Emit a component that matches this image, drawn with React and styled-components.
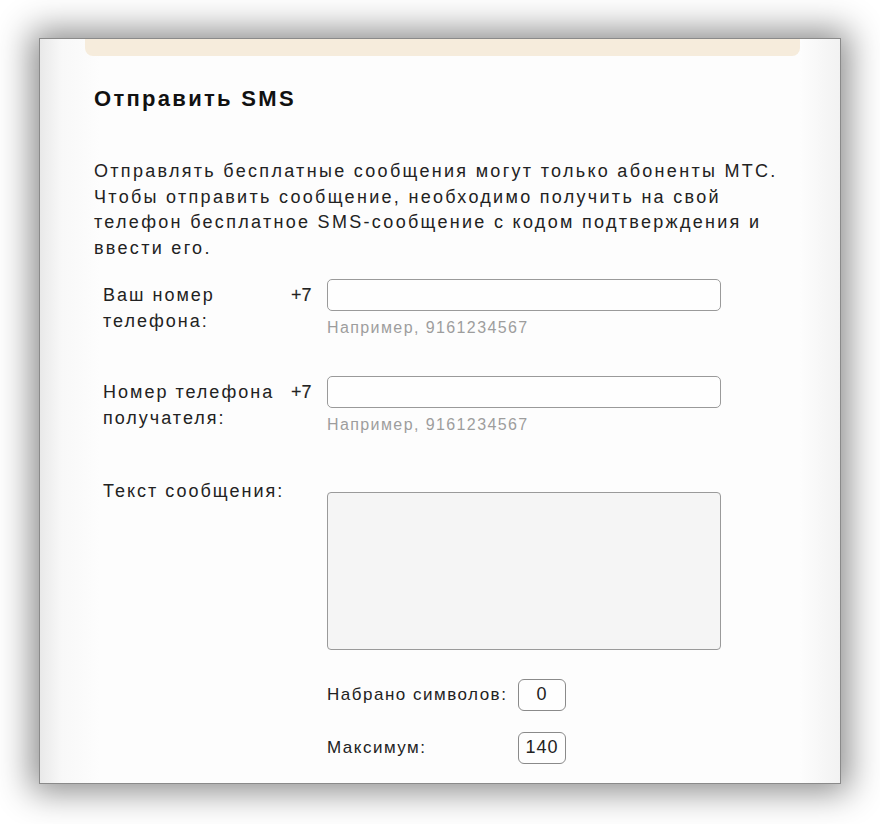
import React from "react";
import styled, { createGlobalStyle } from "styled-components";

const Global = createGlobalStyle`
  html, body { margin: 0; padding: 0; background: #ffffff; }
  body { font-family: "Liberation Sans", Arial, sans-serif; }
`;

const Page = styled.div`
  width: 880px;
  height: 824px;
  box-sizing: border-box;
  padding: 38px 39px 40px 39px;
  background: #ffffff;
`;

const Panel = styled.div`
  width: 802px;
  height: 746px;
  box-sizing: border-box;
  border: 1px solid #8a8a8a;
  background: linear-gradient(
    to right,
    #e9e9e9 0px,
    #f8f8f8 22px,
    #fdfdfd 60px,
    #fdfdfd calc(100% - 40px),
    #f2f2f2 100%
  );
  box-shadow: 0 0 32px 8px rgba(0, 0, 0, 0.45);
  display: flex;
  flex-direction: column;
  color: #1a1a1a;
`;

const TopBar = styled.div`
  margin: 0 40px 0 45px;
  height: 17px;
  background: #f6ecdc;
  border-radius: 0 0 8px 8px;
`;

const Content = styled.div`
  padding: 30px 0 0 54px;
  display: flex;
  flex-direction: column;
`;

const Title = styled.h1`
  margin: 0;
  font-size: 22px;
  line-height: 26px;
  font-weight: bold;
  letter-spacing: 2.3px;
  color: #111;
`;

const Intro = styled.p`
  margin: 47px 0 0 0;
  font-size: 18px;
  line-height: 25.7px;
  letter-spacing: 2.3px;
  white-space: nowrap;
  color: #222;
`;

const Form = styled.div`
  margin: 17px 0 0 9px;
  display: grid;
  grid-template-columns: 188px 36px 394px;
`;

const Label = styled.div`
  font-size: 18px;
  line-height: 26px;
  letter-spacing: 2px;
  color: #222;
  padding-top: 3px;
`;

const Prefix = styled.div`
  font-size: 18px;
  line-height: 26px;
  color: #222;
  padding-top: 3px;
  -webkit-text-stroke: 0.15px #222;
`;

const FieldCol = styled.div`
  display: flex;
  flex-direction: column;
  margin-bottom: ${(p) => p.$gap || 0}px;
`;

const Input = styled.div`
  height: 30px;
  border: 1px solid #9a9a9a;
  border-radius: 5px;
  background: #fefefe;
`;

const Hint = styled.div`
  margin-top: 7px;
  font-size: 16px;
  line-height: 20px;
  letter-spacing: 1.4px;
  color: #9d9d9d;
`;

const TextArea = styled.div`
  margin-top: 17px;
  height: 156px;
  border: 1px solid #9a9a9a;
  border-radius: 4px;
  background: #f5f5f5;
`;

const Counters = styled.div`
  margin: 29px 0 0 0;
  display: grid;
  grid-template-columns: 191px 48px;
  row-gap: 21px;
  align-items: center;
`;

const CounterLabel = styled.div`
  font-size: 17px;
  letter-spacing: 1.5px;
  color: #222;
`;

const CounterBox = styled.div`
  height: 30px;
  border: 1px solid #8a8a8a;
  border-radius: 6px;
  display: flex;
  align-items: center;
  justify-content: center;
  font-size: 18px;
  letter-spacing: 1px;
  color: #222;
  background: #fefefe;
`;

export default function App() {
  return (
    <>
      <Global />
      <Page>
        <Panel>
          <TopBar />
          <Content>
            <Title>Отправить SMS</Title>
            <Intro>
              Отправлять бесплатные сообщения могут только абоненты МТС.
              <br />
              Чтобы отправить сообщение, необходимо получить на свой
              <br />
              телефон бесплатное SMS-сообщение с кодом подтверждения и
              <br />
              ввести его.
            </Intro>
            <Form>
              <Label>Ваш номер<br />телефона:</Label>
              <Prefix>+7</Prefix>
              <FieldCol $gap={38}>
                <Input />
                <Hint>Например, 9161234567</Hint>
              </FieldCol>

              <Label>Номер телефона<br />получателя:</Label>
              <Prefix>+7</Prefix>
              <FieldCol $gap={40}>
                <Input />
                <Hint>Например, 9161234567</Hint>
              </FieldCol>

              <Label>Текст сообщения:</Label>
              <div />
              <FieldCol>
                <TextArea />
                <Counters>
                  <CounterLabel>Набрано символов:</CounterLabel>
                  <CounterBox>0</CounterBox>
                  <CounterLabel>Максимум:</CounterLabel>
                  <CounterBox>140</CounterBox>
                </Counters>
              </FieldCol>
            </Form>
          </Content>
        </Panel>
      </Page>
    </>
  );
}
